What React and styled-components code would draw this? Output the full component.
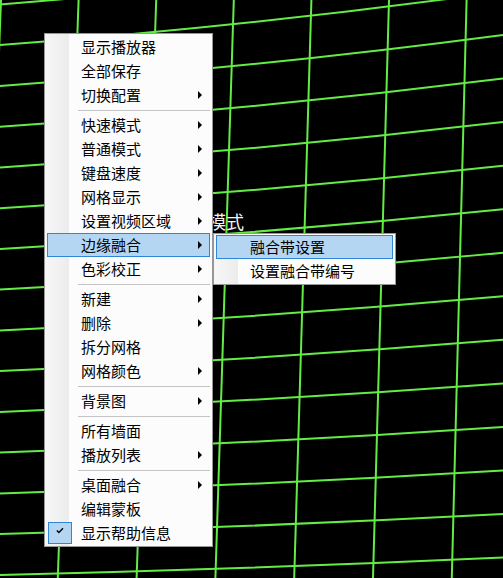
import React from 'react';
import styled, { createGlobalStyle } from 'styled-components';

const GlobalStyle = createGlobalStyle`
  html, body {
    margin: 0;
    padding: 0;
    background: #000;
  }
  body {
    font-family: "Noto Sans CJK SC", "Noto Sans", sans-serif;
  }
`;

// warped projection grid drawn on the canvas
const hLines = Array.from({ length: 16 }, (_, i) => {
  const y0 = 4.4 + 40.75 * i;
  const y1 = y0 - (24 - 1.2 * i);
  const y2 = y1 - (32.5 - 1.6 * i);
  const cy = 2 * y1 - (y0 + y2) / 2;
  return `M0 ${y0.toFixed(1)} Q251.5 ${cy.toFixed(1)} 503 ${y2.toFixed(1)}`;
});

const vLines = Array.from({ length: 7 }, (_, j) => {
  const xt = 1 + 77.6 * j;
  const xb = xt - (22 - 1.2 * j);
  return `M${xt.toFixed(1)} 0 L${xb.toFixed(1)} 578`;
});

const mainItems = [
  { label: '显示播放器' },
  { label: '全部保存' },
  { label: '切换配置', sub: true },
  'sep',
  { label: '快速模式', sub: true },
  { label: '普通模式', sub: true },
  { label: '键盘速度', sub: true },
  { label: '网格显示', sub: true },
  { label: '设置视频区域', sub: true },
  { label: '边缘融合', sub: true, active: true },
  { label: '色彩校正', sub: true },
  'sep',
  { label: '新建', sub: true },
  { label: '删除', sub: true },
  { label: '拆分网格' },
  { label: '网格颜色', sub: true },
  'sep',
  { label: '背景图', sub: true },
  'sep',
  { label: '所有墙面' },
  { label: '播放列表', sub: true },
  'sep',
  { label: '桌面融合', sub: true },
  { label: '编辑蒙板' },
  { label: '显示帮助信息', checked: true },
];

const subItems = [
  { label: '融合带设置', active: true },
  { label: '设置融合带编号' },
];

function MenuList({ items }) {
  return items.map((it, i) =>
    it === 'sep' ? (
      <Separator key={i} />
    ) : (
      <Item key={i} $active={it.active}>
        {it.checked && (
          <CheckBox>
            <svg width="8" height="7" viewBox="0 0 8 7">
              <path d="M0.8 3.4 L2.9 5.4 L7 1.2" fill="none" stroke="#000" strokeWidth="1.4" />
            </svg>
          </CheckBox>
        )}
        <span>{it.label}</span>
        {it.sub && <Arrow />}
      </Item>
    )
  );
}

export default function App() {
  return (
    <>
      <GlobalStyle />
      <Stage>
        <GridLayer width="503" height="578" viewBox="0 0 503 578">
          {hLines.map((d, i) => (
            <path key={'h' + i} d={d} fill="none" stroke="#64ec46" strokeWidth="2" />
          ))}
          {vLines.map((d, i) => (
            <path key={'v' + i} d={d} fill="none" stroke="#64ec46" strokeWidth="2" />
          ))}
        </GridLayer>
        <CanvasLabel>普通模式</CanvasLabel>
        <Menu $x={44} $y={33} $w={169}>
          <MenuList items={mainItems} />
        </Menu>
        <Menu $x={213} $y={233} $w={183}>
          <MenuList items={subItems} />
        </Menu>
      </Stage>
    </>
  );
}

const Stage = styled.div`
  position: relative;
  width: 503px;
  height: 578px;
  background: #000;
  overflow: hidden;
`;

const GridLayer = styled.svg`
  position: absolute;
  left: 0;
  top: 0;
`;

const CanvasLabel = styled.div`
  position: absolute;
  left: 172px;
  top: 211px;
  font-size: 18px;
  line-height: 20px;
  color: #f2f2f2;
  white-space: nowrap;
`;

const Menu = styled.div`
  position: absolute;
  left: ${(p) => p.$x}px;
  top: ${(p) => p.$y}px;
  width: ${(p) => p.$w}px;
  box-sizing: border-box;
  border: 1px solid #979797;
  padding: 1px;
  background: linear-gradient(to right, #f7f7f7 0, #ececec 24px, #fcfcfc 24px);
`;

const Item = styled.div`
  position: relative;
  height: 24px;
  margin: 0 1px;
  box-sizing: border-box;
  display: flex;
  align-items: center;
  padding-left: 33px;
  padding-bottom: 1px;
  font-size: 15px;
  line-height: 1;
  color: #000;
  white-space: nowrap;
  border: 1px solid ${(p) => (p.$active ? '#2f86d8' : 'transparent')};
  background: ${(p) => (p.$active ? '#b5d6f3' : 'transparent')};
`;

const Arrow = styled.i`
  margin-left: auto;
  margin-right: 7px;
  width: 0;
  height: 0;
  border-left: 4px solid #000;
  border-top: 4px solid transparent;
  border-bottom: 4px solid transparent;
`;

const CheckBox = styled.div`
  position: absolute;
  left: 0;
  top: 0;
  width: 24px;
  height: 22px;
  box-sizing: border-box;
  background: #b5d6f3;
  border: 1px solid #2f86d8;
  display: flex;
  align-items: flex-start;
  justify-content: flex-start;
  padding: 4px 0 0 7px;
`;

const Separator = styled.div`
  height: 6px;
  margin: 0 1px 0 32px;
  display: flex;
  align-items: center;
  &::after {
    content: '';
    flex: 1;
    height: 1px;
    background: #c4c4c4;
  }
`;
